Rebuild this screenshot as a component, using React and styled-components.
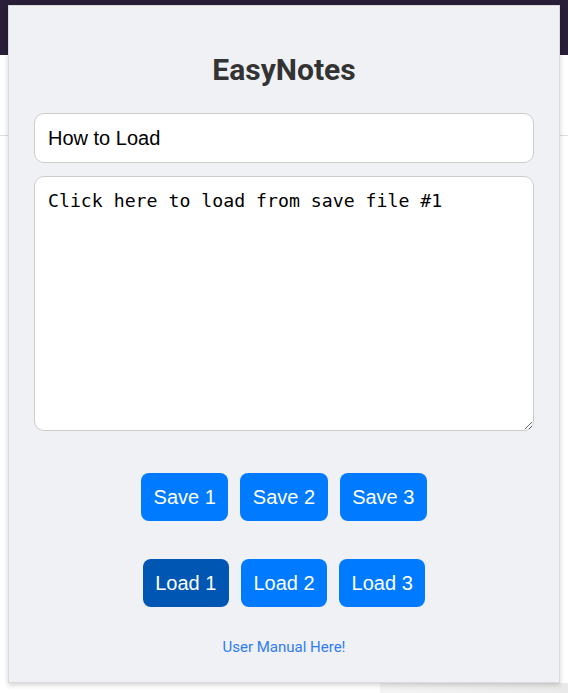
import React from "react";
import styled, { createGlobalStyle } from "styled-components";

const Global = createGlobalStyle`
  html, body { margin: 0; padding: 0; background: #ffffff; }
  body { font-family: Roboto, "Liberation Sans", sans-serif; }
  #root { position: relative; }
`;

const Page = styled.div`
  position: relative;
  min-height: 693px;
  display: flex;
  flex-direction: column;
  overflow: hidden;
`;

const TopBand = styled.div`
  height: 55px;
  background: #281e37;
  flex: none;
`;

const Divider = styled.div`
  margin-top: 80px;
  height: 1px;
  background: #dedede;
`;

const FooterShade = styled.div`
  margin-top: auto;
  align-self: flex-end;
  width: 188px;
  height: 10px;
  background: linear-gradient(90deg, #f3f3f3, #e9e9e9);
`;

const Popup = styled.div`
  position: absolute;
  top: 5px;
  left: 8px;
  width: 552px;
  height: 678px;
  box-sizing: border-box;
  border: 1px solid #dadada;
  background: #f0f1f5;
  box-shadow: 0 2px 5px rgba(0, 0, 0, 0.18);
  padding: 0 25px;
  display: flex;
  flex-direction: column;
`;

const Title = styled.h1`
  margin: 45px 0 25px;
  font-family: Roboto, "Liberation Sans", sans-serif;
  font-weight: 700;
  font-size: 30px;
  line-height: 37px;
  color: #333333;
  text-align: center;
`;

const TitleInput = styled.input`
  box-sizing: border-box;
  height: 50px;
  width: 100%;
  border: 1px solid #cccccc;
  border-radius: 10px;
  background: #ffffff;
  padding: 0 13px;
  font-family: "Liberation Sans", Arial, sans-serif;
  font-size: 20px;
  color: #000000;
  outline: none;
`;

const NoteArea = styled.textarea`
  box-sizing: border-box;
  margin-top: 13px;
  height: 255px;
  width: 100%;
  border: 1px solid #cccccc;
  border-radius: 10px;
  background: #ffffff;
  padding: 13px 13px 12px;
  font-family: "DejaVu Sans Mono", monospace;
  font-size: 18.2px;
  color: #000000;
  resize: vertical;
  outline: none;
`;

const ButtonRow = styled.div`
  display: flex;
  justify-content: center;
  gap: 12px;
  margin-top: ${(p) => p.$top}px;
`;

const SlotButton = styled.button`
  border: none;
  border-radius: 8px;
  padding: 12px 12.5px;
  font-family: "Liberation Sans", Arial, sans-serif;
  font-size: 20px;
  line-height: 24px;
  color: #ffffff;
  background: ${(p) => (p.$active ? "#0056b3" : "#007bff")};
  cursor: pointer;
`;

const ManualLink = styled.a`
  margin-top: 32px;
  align-self: center;
  font-family: Roboto, sans-serif;
  font-size: 15px;
  line-height: 17px;
  color: #2f7cf6;
  text-decoration: none;
`;

export default function App() {
  return (
    <>
      <Global />
      <Page>
        <TopBand />
        <Divider />
        <FooterShade />
        <Popup>
          <Title>EasyNotes</Title>
          <TitleInput defaultValue="How to Load" />
          <NoteArea defaultValue="Click here to load from save file #1" />
          <ButtonRow $top={42}>
            <SlotButton>Save 1</SlotButton>
            <SlotButton>Save 2</SlotButton>
            <SlotButton>Save 3</SlotButton>
          </ButtonRow>
          <ButtonRow $top={38}>
            <SlotButton $active>Load 1</SlotButton>
            <SlotButton>Load 2</SlotButton>
            <SlotButton>Load 3</SlotButton>
          </ButtonRow>
          <ManualLink href="#">User Manual Here!</ManualLink>
        </Popup>
      </Page>
    </>
  );
}
